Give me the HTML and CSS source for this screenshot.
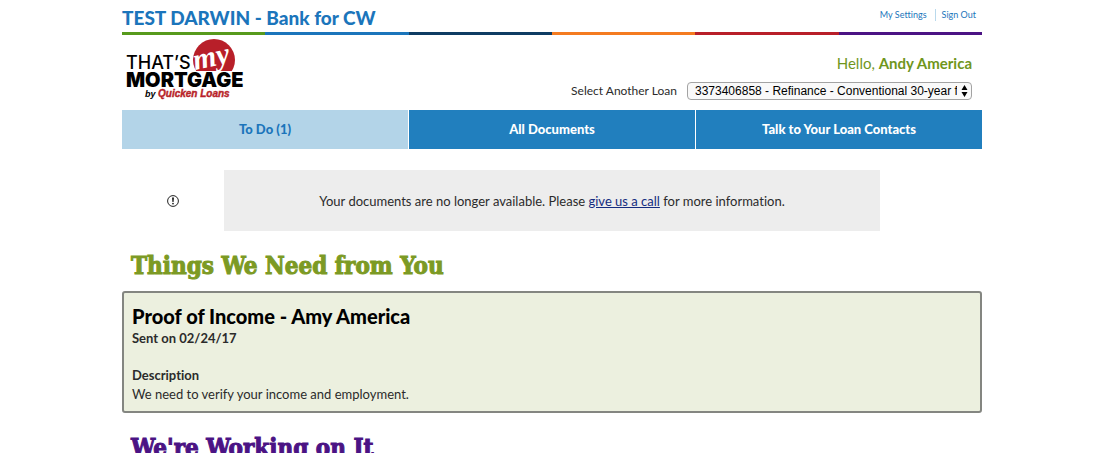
FILE: index.html
```html
<!DOCTYPE html>
<html lang="en">
<head>
<meta charset="utf-8">
<meta name="viewport" content="width=device-width, initial-scale=1">
<title>That's My Mortgage</title>
<link rel="stylesheet" href="styles.css">
</head>
<body>
<div class="page">
  <header>
    <div class="topbar">
      <p class="bank">TEST DARWIN - Bank for CW</p>
      <nav class="account" aria-label="Account">
        <a href="#settings">My Settings</a>
        <a href="#signout">Sign Out</a>
      </nav>
    </div>
    <div class="stripe"></div>
    <div class="masthead">
      <svg class="logo" viewBox="0 0 120 62" role="img" aria-label="That's My Mortgage by Quicken Loans">
        <circle cx="90" cy="22" r="21" fill="#b81f29"/>
        <rect x="66" y="33" width="50" height="14" fill="#fff"/>
        <text class="logo-that" x="2" y="31">THAT’S</text>
        <text class="logo-my" x="70" y="28" transform="rotate(-12 90 25)">my</text>
        <text class="logo-mortgage" x="2" y="49">MORTGAGE</text>
        <text class="logo-by" x="21" y="59">by</text>
        <text class="logo-ql" x="34" y="59">Quicken Loans</text>
      </svg>
      <div class="user">
        <p class="hello">Hello, <strong>Andy America</strong></p>
        <div class="loan">
          <label for="loan">Select Another Loan</label>
          <div class="select-wrap">
            <select id="loan">
              <option>3373406858 - Refinance - Conventional 30-year fixed</option>
            </select>
            <svg class="arrows" viewBox="0 0 7 12" aria-hidden="true"><path d="M.5 5 3.500 0 6.500 5zM.5 7h6L3.500 12z"/></svg>
          </div>
        </div>
      </div>
    </div>
    <nav class="tabs" aria-label="Main">
      <a class="tab active" href="#todo">To Do (1)</a>
      <a class="tab" href="#documents">All Documents</a>
      <a class="tab" href="#contacts">Talk to Your Loan Contacts</a>
    </nav>
  </header>
  <main>
    <div class="notice">
      <svg class="alert" viewBox="0 0 12 12" aria-hidden="true">
        <circle cx="6" cy="6" r="5.400" fill="none" stroke="#222" stroke-width="1"/>
        <path d="M5 2.500h2L6.600 7H5.400z" fill="#222"/>
        <circle cx="6" cy="8.600" r=".9" fill="#222"/>
      </svg>
      <p class="message">Your documents are no longer available. Please <a href="#call">give us a call</a> for more information.</p>
    </div>
    <section>
      <h1 class="heading need">Things We Need from You</h1>
      <article class="card">
        <h2 class="card-title">Proof of Income - Amy America</h2>
        <p class="sent">Sent on 02/24/17</p>
        <h3 class="label">Description</h3>
        <p class="text">We need to verify your income and employment.</p>
      </article>
    </section>
    <section>
      <h1 class="heading working">We're Working on It</h1>
    </section>
  </main>
</div>
</body>
</html>
```
FILE: styles.css
```css
* { box-sizing: border-box; }

body {
  margin: 0;
  background: #fff;
  color: #2b2b2b;
  font: 13px/20px Lato, sans-serif;
  font-variant-ligatures: none;
}

p, h1, h2, h3 { margin: 0; }

.page {
  max-width: 860px;
  margin: 0 auto;
}

.topbar {
  display: flex;
  justify-content: space-between;
  align-items: center;
  height: 32px;
  padding-top: 4px;
}

.bank {
  color: #1b75bb;
  font-size: 19px;
  font-weight: 900;
  line-height: 28px;
}

.account {
  display: flex;
  padding-bottom: 6px;
  font-size: 9px;
  line-height: 12px;
}

.account a {
  padding: 0 6px;
  color: #1b75bb;
  text-decoration: none;
}

.account a:first-child {
  padding-right: 8px;
  border-right: 1px solid #b9d9ec;
}

.stripe {
  height: 3px;
  background: linear-gradient(to right,
    #579a1c 0 16.670%, #1b75bb 0 33.330%, #0f3c63 0 50%,
    #f47b20 0 66.670%, #b81f29 0 83.330%, #4b1384 0);
}

.masthead {
  display: flex;
  justify-content: space-between;
  height: 75px;
  padding: 3px 10px 0 2px;
}

.logo {
  width: 120px;
  height: 62px;
}

.logo-that { font: 500 18px Inter, sans-serif; }
.logo-my { font: italic bold 30px "Liberation Serif", serif; fill: #fff; }
.logo-mortgage { font: 900 20px Inter, sans-serif; }
.logo-by { font: italic bold 9px "Liberation Sans", sans-serif; }
.logo-ql { font: italic bold 10px "Liberation Sans", sans-serif; fill: #b81f29; stroke: #b81f29; stroke-width: .4; }

.user {
  padding-top: 15px;
  text-align: right;
}

.hello {
  color: #6f961c;
  font-size: 15px;
}

.loan {
  display: flex;
  align-items: center;
  gap: 10px;
  margin-top: 9px;
  font-size: 12px;
  line-height: 18px;
}

.select-wrap { position: relative; }

.select-wrap select {
  display: block;
  width: 285px;
  height: 18px;
  padding: 0 14px 0 7px;
  border: 1px solid #a3a3a3;
  border-radius: 4px;
  appearance: none;
  background: #f9f9f9;
  color: #000;
  font: 12px/16px "Liberation Sans", Arial, sans-serif;
}

.arrows {
  position: absolute;
  top: 3px;
  right: 4px;
  width: 7px;
  height: 12px;
}

.tabs {
  display: grid;
  grid-template-columns: repeat(3, 1fr);
  gap: 1px;
}

.tab {
  padding: 9px 0 10px;
  background: #217fbe;
  color: #fff;
  font-weight: 900;
  text-align: center;
  text-decoration: none;
}

.tab.active {
  background: #b3d4e8;
  color: #1b75bb;
}

.notice {
  display: grid;
  grid-template-columns: 102px 1fr 102px;
  align-items: center;
  margin-top: 21px;
}

.alert {
  width: 12px;
  height: 12px;
  justify-self: center;
}

.message {
  padding: 21px 10px 20px;
  background: #ededed;
  text-align: center;
}

.message a { color: #142c80; }

.heading {
  padding-left: 9px;
  font: bold 24px/32px "DejaVu Serif Condensed", "DejaVu Serif", serif;
  -webkit-text-stroke: 1px currentColor;
}

.need {
  margin-top: 19px;
  color: #7c9a24;
}

.card {
  margin-top: 9px;
  padding: 10px 8px 7px;
  border: 2px solid #848681;
  border-radius: 3px;
  background: #ecf0df;
}

.card-title {
  color: #000;
  font-size: 20px;
  font-weight: 900;
  line-height: 26px;
}

.sent, .label, .text {
  font-size: 13px;
  line-height: 19px;
}

.sent, .label { font-weight: bold; }

.label { margin-top: 18px; }

.working {
  margin-top: 19px;
  color: #4b1384;
}
```
